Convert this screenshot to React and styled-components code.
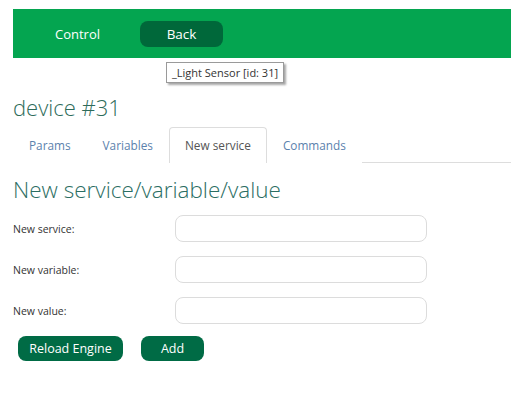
import React from 'react'
import styled, { createGlobalStyle } from 'styled-components'

const Global = createGlobalStyle`
  body {
    margin: 0;
    background: #fff;
    font-family: "Open Sans", "Noto Sans", sans-serif;
  }
`

const Page = styled.div`
  position: relative;
  padding: 9px 0 0 13px;
`

const Header = styled.div`
  display: flex;
  align-items: center;
  height: 49px;
  background: #04a550;
  padding-left: 42px;
  gap: 40px;
`

const NavLink = styled.span`
  color: #fff;
  font-size: 13px;
`

const NavButton = styled.span`
  display: flex;
  align-items: center;
  justify-content: center;
  width: 83px;
  height: 26px;
  border-radius: 8px;
  background: #00683a;
  color: #fff;
  font-size: 13.5px;
`

const Tooltip = styled.div`
  position: absolute;
  left: 166px;
  top: 62px;
  height: 19px;
  padding: 0 5px;
  display: flex;
  align-items: center;
  border: 1px solid #9a9a9a;
  box-shadow: 2px 2px 2px rgba(0, 0, 0, 0.35);
  background: #fff;
  color: #333;
  font-size: 11px;
`

const DeviceTitle = styled.h1`
  margin: 35px 0 0;
  font-size: 22px;
  font-weight: 300;
  line-height: 28px;
  color: #2e6b5a;
`

const Tabs = styled.div`
  display: flex;
  margin-top: 6px;
  border-bottom: 1px solid #ddd;
`

const Tab = styled.div`
  padding: 9px 15px;
  font-size: 11.8px;
  line-height: 17px;
  color: ${p => (p.$active ? '#555' : '#5b82ad')};
  border: 1px solid ${p => (p.$active ? '#ddd' : 'transparent')};
  border-bottom: none;
  border-radius: 4px 4px 0 0;
  background: #fff;
  margin-bottom: -1px;
`

const Heading = styled.h2`
  margin: 10px 0 0;
  font-size: 22.5px;
  font-weight: 300;
  line-height: 34px;
  color: #2b6e63;
`

const Form = styled.div`
  display: flex;
  flex-direction: column;
  gap: 14px;
  margin-top: 8px;
`

const Row = styled.div`
  display: flex;
  align-items: center;
  height: 27px;
`

const Label = styled.label`
  width: 162px;
  font-size: 10.5px;
  color: #333;
`

const Input = styled.input`
  box-sizing: border-box;
  width: 252px;
  height: 27px;
  border: 1px solid #dcdcdc;
  border-radius: 8px;
  outline: none;
`

const Actions = styled.div`
  display: flex;
  gap: 18px;
  margin: 12px 0 0 5px;
`

const Button = styled.button`
  height: 25px;
  width: ${p => p.$w}px;
  border: none;
  border-radius: 8px;
  background: #006b45;
  color: #fff;
  font-family: "Open Sans", "Noto Sans", sans-serif;
  font-size: 12.5px;
  padding: 0;
`

const fields = ['New service:', 'New variable:', 'New value:']

export default function App() {
  return (
    <Page>
      <Global />
      <Header>
        <NavLink>Control</NavLink>
        <NavButton>Back</NavButton>
      </Header>
      <Tooltip>_Light Sensor [id: 31]</Tooltip>
      <DeviceTitle>device #31</DeviceTitle>
      <Tabs>
        <Tab>Params</Tab>
        <Tab>Variables</Tab>
        <Tab $active>New service</Tab>
        <Tab>Commands</Tab>
      </Tabs>
      <Heading>New service/variable/value</Heading>
      <Form>
        {fields.map(f => (
          <Row key={f}>
            <Label>{f}</Label>
            <Input />
          </Row>
        ))}
      </Form>
      <Actions>
        <Button $w={105}>Reload Engine</Button>
        <Button $w={63}>Add</Button>
      </Actions>
    </Page>
  )
}
